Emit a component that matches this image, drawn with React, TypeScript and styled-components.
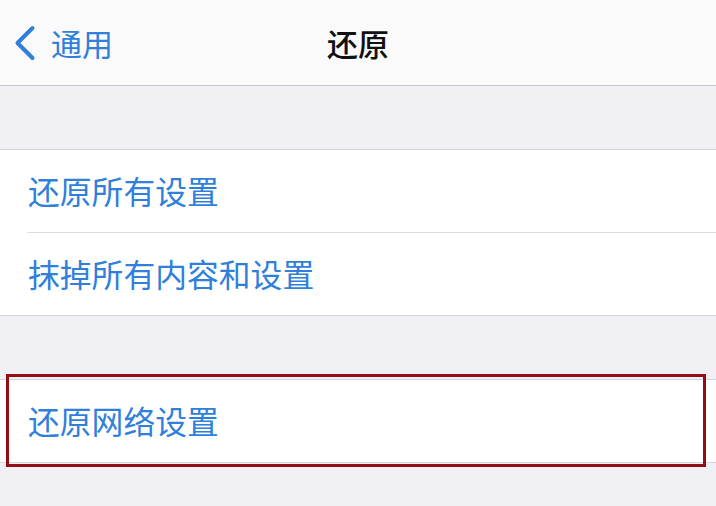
import React from "react";
import styled, { createGlobalStyle } from "styled-components";

const Global = createGlobalStyle`
  html, body { margin: 0; padding: 0; background: #f1f0f5; }
  body { font-family: "Noto Sans CJK SC", "Noto Sans", sans-serif; }
`;

const Page = styled.div`
  width: 716px;
  height: 506px;
  background: #f1f0f5;
  overflow: hidden;
  display: flex;
  flex-direction: column;
`;

const NavBar = styled.header`
  height: 85px;
  background: #fafafb;
  border-bottom: 1px solid #c6c5ca;
  display: grid;
  grid-template-columns: 1fr auto 1fr;
  align-items: center;
`;

const BackButton = styled.div`
  display: flex;
  align-items: center;
  gap: 14px;
  padding-left: 13px;
  color: #2f7fdb;
  font-size: 31px;
  line-height: 1;
`;

const Title = styled.div`
  font-size: 31px;
  color: #111;
  line-height: 1;
  font-weight: 500;
`;

const Gap = styled.div`
  height: 63px;
`;

const Group = styled.section`
  position: relative;
  background: #fff;
  border-top: 1px solid #d6d5da;
  border-bottom: 1px solid #d6d5da;
  display: flex;
  flex-direction: column;
`;

const Row = styled.div<{ $divider?: boolean }>`
  height: 82px;
  display: flex;
  align-items: center;
  padding-left: 28px;
  color: #2f7fdb;
  font-size: 31.8px;
  line-height: 1;
  position: relative;
  ${(p) =>
    p.$divider
      ? `
    &::after {
      content: "";
      position: absolute;
      left: 27px;
      right: 0;
      bottom: -1px;
      height: 1px;
      background: #dcdbe0;
    }
    margin-bottom: 1px;
  `
      : ""}
`;

const Highlight = styled.div`
  position: absolute;
  left: 6px;
  right: 10px;
  top: -6px;
  bottom: -5px;
  border: 3px solid #940d16;
  pointer-events: none;
`;

const Chevron = () => (
  <svg width="24" height="36" viewBox="0 0 24 36" fill="none">
    <path
      d="M19.5 3 L4.5 18 L19.5 33"
      stroke="#2f7fdb"
      strokeWidth="4"
      strokeLinecap="round"
      strokeLinejoin="round"
    />
  </svg>
);

export default function App() {
  return (
    <Page>
      <Global />
      <NavBar>
        <BackButton>
          <Chevron />
          <span>通用</span>
        </BackButton>
        <Title>还原</Title>
        <div />
      </NavBar>
      <Gap />
      <Group>
        <Row $divider>还原所有设置</Row>
        <Row>抹掉所有内容和设置</Row>
      </Group>
      <Gap />
      <Group>
        <Row>还原网络设置</Row>
        <Highlight />
      </Group>
    </Page>
  );
}
